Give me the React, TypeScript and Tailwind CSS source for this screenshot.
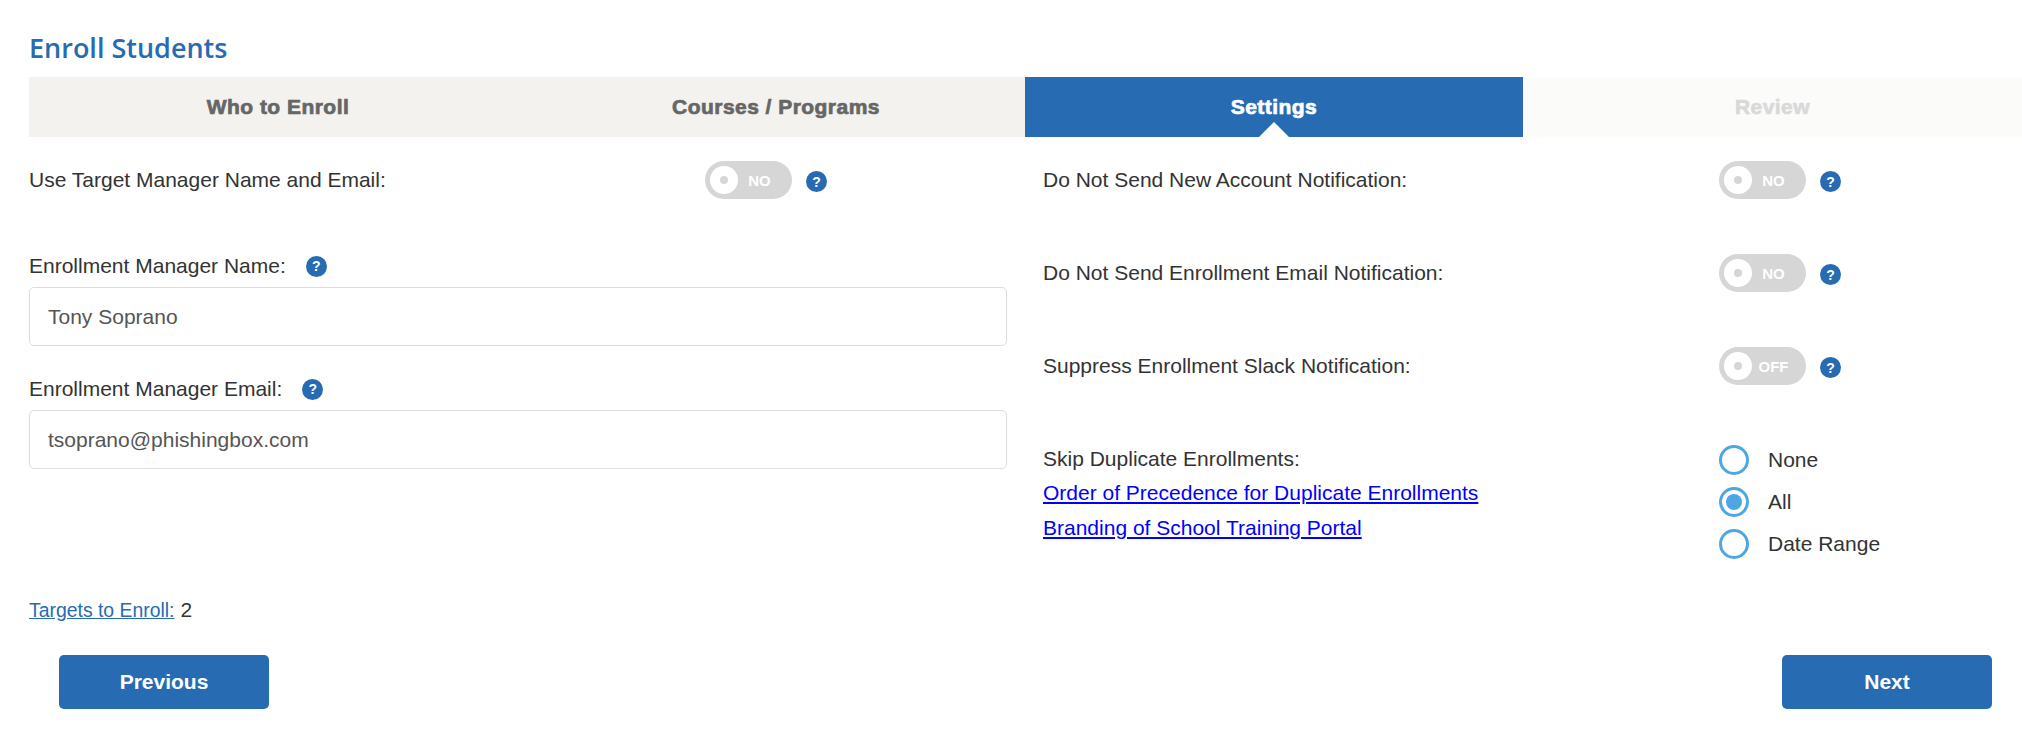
import React from 'react';

const Help = () => (
  <span className="flex items-center justify-center w-[21px] h-[21px] shrink-0 rounded-full bg-[#276cb2] text-white text-[14px] leading-none font-black">
    ?
  </span>
);

const Toggle = ({ label }: { label: string }) => (
  <div className="flex items-center w-[87px] h-[38px] shrink-0 rounded-full bg-[#d6d6d6] pl-[5px]">
    <span className="flex items-center justify-center w-[28px] h-[28px] rounded-full bg-white">
      <span className="w-[8px] h-[8px] rounded-full bg-[#d6d6d6]" />
    </span>
    <span className="w-[43px] text-center text-white text-[15px] leading-none font-bold">{label}</span>
  </div>
);

const ToggleRow = ({ text, label }: { text: string; label: string }) => (
  <div className="flex items-center h-[38px]">
    <div className="w-[676px] shrink-0">{text}</div>
    <Toggle label={label} />
    <span className="ml-[14px] mt-[3px]">
      <Help />
    </span>
  </div>
);

const Field = ({ label, value, gap }: { label: string; value: string; gap: string }) => (
  <div className="flex flex-col">
    <div className={`flex items-center h-[24px] ${gap}`}>
      <span>{label}</span>
      <Help />
    </div>
    <input
      readOnly
      value={value}
      className="mt-[9px] w-full h-[59px] px-[18px] border border-[#dddddd] rounded-[5px] text-[#555555] outline-none"
    />
  </div>
);

const Radio = ({ label, checked }: { label: string; checked?: boolean }) => (
  <div className="flex items-center h-[30px]">
    <span className="flex items-center justify-center w-[30px] h-[30px] rounded-full border-[3px] border-[#4ea6e2]">
      {checked && <span className="w-[16px] h-[16px] rounded-full bg-[#4ea6e2]" />}
    </span>
    <span className="ml-[19px] -mt-[1px]">{label}</span>
  </div>
);

const tabClass = 'flex items-center justify-center text-[21px] font-bold tracking-[0.46px] [-webkit-text-stroke:0.7px]';

export default function App() {
  return (
    <div className="h-[734px] bg-white overflow-hidden pl-[29px] text-[21px] leading-[24px] text-[#333333] font-['Liberation_Sans',Arial,sans-serif]">
      <h1 className="pt-[30px] h-[77px] text-[27px] leading-[36px] font-semibold text-[#276cb2] font-['Open_Sans',sans-serif]">
        Enroll Students
      </h1>

      <div className="flex h-[60px]">
        <div className={`${tabClass} w-[498px] bg-[#f3f2ee] text-[#666666]`}>Who to Enroll</div>
        <div className={`${tabClass} w-[498px] bg-[#f3f2ee] text-[#666666]`}>Courses / Programs</div>
        <div className={`${tabClass} w-[498px] relative bg-[#276cb2] text-white`}>
          Settings
          <span className="absolute bottom-0 left-1/2 -ml-[15px] w-0 h-0 border-x-[15px] border-x-transparent border-b-[15px] border-b-white" />
        </div>
        <div className={`${tabClass} flex-1 bg-[#fbfbf9] text-[#d9d9d9]`}>Review</div>
      </div>

      <div className="flex">
        <div className="w-[978px] shrink-0 pt-[24px]">
          <ToggleRow text="Use Target Manager Name and Email:" label="NO" />
          <div className="mt-[55px]">
            <Field label="Enrollment Manager Name:" value="Tony Soprano" gap="gap-[20px]" />
          </div>
          <div className="mt-[31px]">
            <Field label="Enrollment Manager Email:" value="tsoprano@phishingbox.com" gap="gap-[20px]" />
          </div>
        </div>

        <div className="ml-[36px] pt-[24px] flex flex-col">
          <div className="flex flex-col gap-[55px]">
            <ToggleRow text="Do Not Send New Account Notification:" label="NO" />
            <ToggleRow text="Do Not Send Enrollment Email Notification:" label="NO" />
            <ToggleRow text="Suppress Enrollment Slack Notification:" label="OFF" />
          </div>
          <div className="flex mt-[60px]">
            <div className="w-[676px] shrink-0 flex flex-col pt-[2px]">
              <div>Skip Duplicate Enrollments:</div>
              <a href="#" className="mt-[10px] text-[#0000ff] underline">Order of Precedence for Duplicate Enrollments</a>
              <a href="#" className="mt-[11px] text-[#0000ff] underline">Branding of School Training Portal</a>
            </div>
            <div className="flex flex-col gap-[12px]">
              <Radio label="None" />
              <Radio label="All" checked />
              <Radio label="Date Range" />
            </div>
          </div>
        </div>
      </div>

      <div className="flex items-baseline mt-[39px] gap-[6px] text-[19.4px]">
        <a href="#" className="text-[#276cb2] underline">Targets to Enroll:</a>
        <span className="text-[21px]">2</span>
      </div>

      <div className="flex justify-between mt-[33px] pl-[30px] pr-[30px]">
        <button className="w-[210px] h-[54px] rounded-[5px] bg-[#276cb2] text-white font-bold">Previous</button>
        <button className="w-[210px] h-[54px] rounded-[5px] bg-[#276cb2] text-white font-bold">Next</button>
      </div>
    </div>
  );
}
